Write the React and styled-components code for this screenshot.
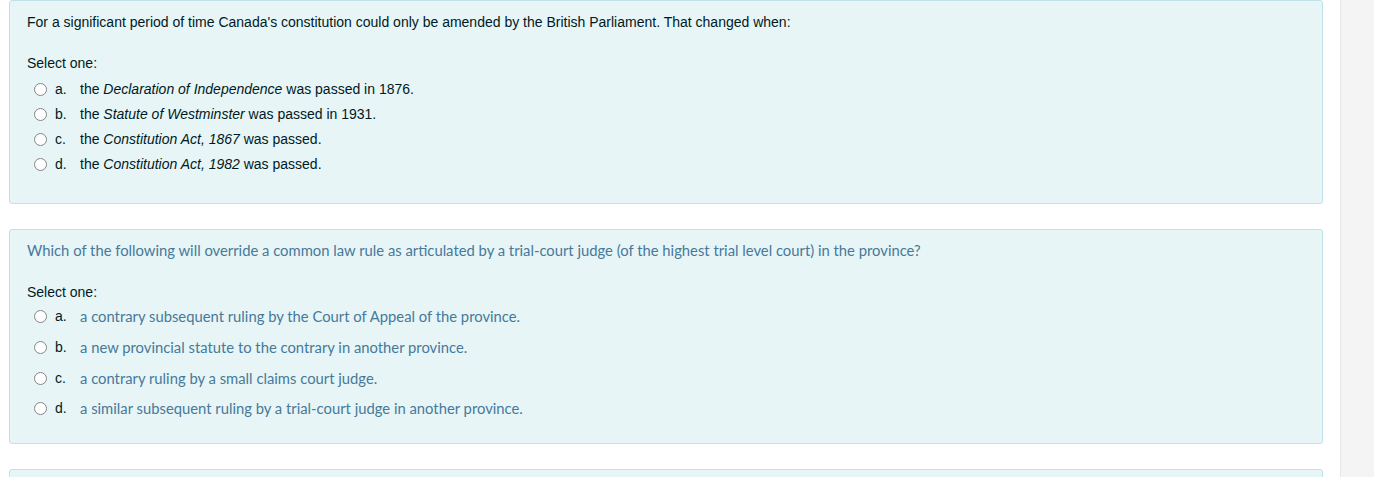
import React from "react";
import styled, { createGlobalStyle } from "styled-components";

const GlobalStyle = createGlobalStyle`
  html, body {
    margin: 0;
    padding: 0;
    background: #ffffff;
  }
  body {
    font-family: "Liberation Sans", Arial, sans-serif;
    font-size: 14px;
    color: #001a1e;
  }
`;

const Page = styled.div`
  display: flex;
  height: 477px;
  overflow: hidden;
`;

const Main = styled.div`
  flex: 1;
  display: flex;
  flex-direction: column;
  gap: 25px;
  padding: 0 17px 0 9px;
`;

const Sidebar = styled.div`
  width: 33px;
  flex-shrink: 0;
  background: #f4f4f4;
  border-left: 1px solid #e6e6e6;
`;

const Card = styled.div`
  flex-shrink: 0;
  background: #e7f5f7;
  border: 1px solid #c0e1e7;
  border-radius: 3px;
  padding: ${(p) => p.$pad || "11px 17px 27px"};
  min-height: ${(p) => p.$minHeight || "0"};
`;

const QText = styled.div`
  line-height: 20px;
  font-family: ${(p) => (p.$alt ? '"Lato", "Open Sans", sans-serif' : '"Liberation Sans", Arial, sans-serif')};
  font-size: ${(p) => (p.$alt ? "14.8px" : "14px")};
  color: ${(p) => (p.$alt ? "#46799a" : "#001a1e")};
`;

const Prompt = styled.div`
  line-height: 18px;
  margin-top: ${(p) => p.$gap};
`;

const Answers = styled.div`
  display: flex;
  flex-direction: column;
  margin-top: ${(p) => p.$gap};
`;

const Row = styled.div`
  display: flex;
  align-items: center;
  height: ${(p) => p.$h};
  padding-left: 7px;
`;

const Radio = styled.span`
  width: 13px;
  height: 13px;
  box-sizing: border-box;
  border-radius: 50%;
  border: 1px solid #858585;
  background: #ffffff;
  flex-shrink: 0;
  margin-top: 1px;
`;

const Letter = styled.span`
  width: 33px;
  padding-left: 8px;
  box-sizing: border-box;
  color: #001a1e;
  font-family: "Liberation Sans", Arial, sans-serif;
  font-size: 14px;
`;

const AnswerText = styled.span`
  font-family: ${(p) => (p.$alt ? '"Lato", "Open Sans", sans-serif' : '"Liberation Sans", Arial, sans-serif')};
  font-size: ${(p) => (p.$alt ? "14.8px" : "14px")};
  color: ${(p) => (p.$alt ? "#46799a" : "#001a1e")};
`;

const q1Answers = [
  ["a.", <>the <i>Declaration of Independence</i> was passed in 1876.</>],
  ["b.", <>the <i>Statute of Westminster</i> was passed in 1931.</>],
  ["c.", <>the <i>Constitution Act, 1867</i> was passed.</>],
  ["d.", <>the <i>Constitution Act, 1982</i> was passed.</>],
];

const q2Answers = [
  ["a.", "a contrary subsequent ruling by the Court of Appeal of the province."],
  ["b.", "a new provincial statute to the contrary in another province."],
  ["c.", "a contrary ruling by a small claims court judge."],
  ["d.", "a similar subsequent ruling by a trial-court judge in another province."],
];

function Question({ text, answers, alt, pad, promptGap, answersGap, rowHeight }) {
  return (
    <Card $pad={pad}>
      <QText $alt={alt}>{text}</QText>
      <Prompt $gap={promptGap}>Select one:</Prompt>
      <Answers $gap={answersGap}>
        {answers.map(([letter, body]) => (
          <Row key={letter} $h={rowHeight}>
            <Radio />
            <Letter>{letter}</Letter>
            <AnswerText $alt={alt}>{body}</AnswerText>
          </Row>
        ))}
      </Answers>
    </Card>
  );
}

export default function App() {
  return (
    <Page>
      <GlobalStyle />
      <Main>
        <Question
          text="For a significant period of time Canada's constitution could only be amended by the British Parliament. That changed when:"
          answers={q1Answers}
          pad="11px 17px 27px"
          promptGap="22px"
          answersGap="4px"
          rowHeight="25px"
        />
        <Question
          alt
          text="Which of the following will override a common law rule as articulated by a trial-court judge (of the highest trial level court) in the province?"
          answers={q2Answers}
          pad="10px 17px 19px"
          promptGap="23px"
          answersGap="0px"
          rowHeight="30.67px"
        />
        <Card $minHeight="40px" />
      </Main>
      <Sidebar />
    </Page>
  );
}
